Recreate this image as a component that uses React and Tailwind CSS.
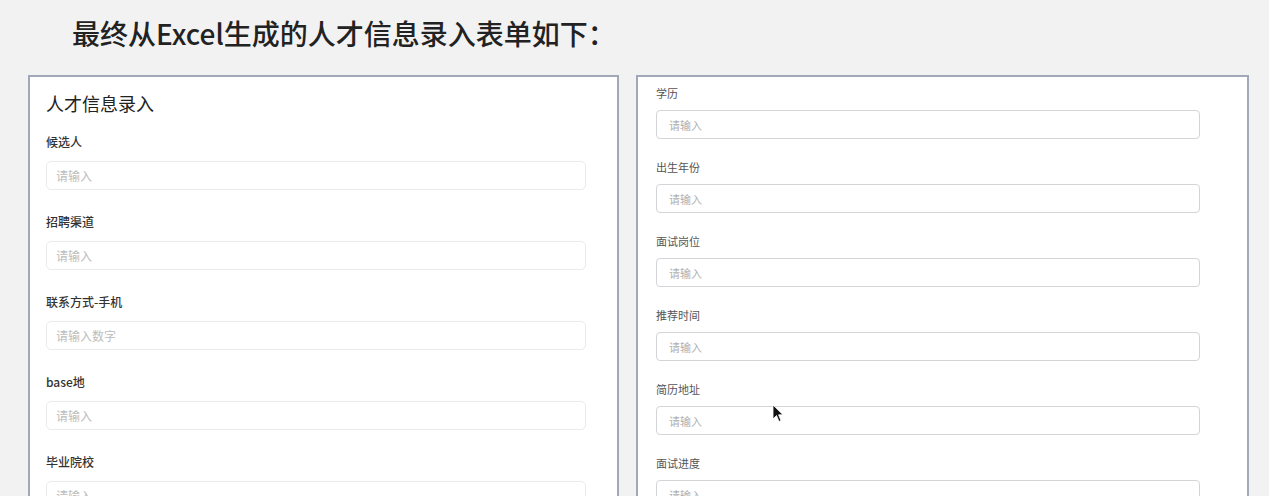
import React from "react";

const cjk = { fontFamily: '"Noto Sans CJK SC", "Noto Sans", sans-serif' };

const leftFields = [
  { label: "候选人", ph: "请输入" },
  { label: "招聘渠道", ph: "请输入" },
  { label: "联系方式-手机", ph: "请输入数字" },
  { label: "base地", ph: "请输入" },
  { label: "毕业院校", ph: "请输入" },
];

const rightFields = ["学历", "出生年份", "面试岗位", "推荐时间", "简历地址", "面试进度"];

const LeftField = ({ label, ph }) => (
  <div className="mb-[22px]">
    <div className="h-5 leading-5 text-[12px] font-medium text-[#333]">{label}</div>
    <input
      readOnly
      placeholder={ph}
      className="mt-[9px] block w-[540px] h-[29px] rounded-[5px] border border-[#ebebeb] bg-white pl-[9px] text-[12px] outline-none placeholder:text-[#bdbdbd]"
      style={cjk}
    />
  </div>
);

const RightField = ({ label }) => (
  <div className="mb-[19px]">
    <div className="h-[18px] leading-[18px] text-[11px] text-[#555]">{label}</div>
    <input
      readOnly
      placeholder="请输入"
      className="mt-2 block w-[544px] h-[29px] rounded-[4px] border border-[#d2d4d8] bg-white pl-[12px] text-[11px] outline-none placeholder:text-[#b0b0b0]"
      style={cjk}
    />
  </div>
);

const App = () => {
  return (
    <div className="relative h-[496px] w-full overflow-hidden bg-[#f2f2f2]" style={cjk}>
      <h1 className="pl-[72px] pt-[14px] h-[75px] text-[28px] leading-[38px] font-medium text-[#222]">
        最终从Excel生成的人才信息录入表单如下：
      </h1>
      <div className="flex gap-[17px] pl-[28px]">
        <div className="w-[591px] h-[460px] border-2 border-[#a3a8b8] bg-white pl-[16px] pt-[14px]">
          <div className="h-6 leading-6 text-[18px] text-[#222]">人才信息录入</div>
          <div className="mt-[17px]">
            {leftFields.map((f) => (
              <LeftField key={f.label} {...f} />
            ))}
          </div>
        </div>
        <div className="w-[613px] h-[460px] border-2 border-[#a3a8b8] bg-white pl-[18px] pt-[7px]">
          {rightFields.map((l) => (
            <RightField key={l} label={l} />
          ))}
        </div>
      </div>
      <svg
        className="absolute left-[772px] top-[404px]"
        width="12"
        height="19"
        viewBox="0 0 12 19"
      >
        <path d="M1 1 L1 15 L4.5 11.5 L7 17.5 L9 16.6 L6.6 10.8 L11 10.8 Z" fill="#111" stroke="#fff" strokeWidth="0.8" />
      </svg>
    </div>
  );
};

export default App;
